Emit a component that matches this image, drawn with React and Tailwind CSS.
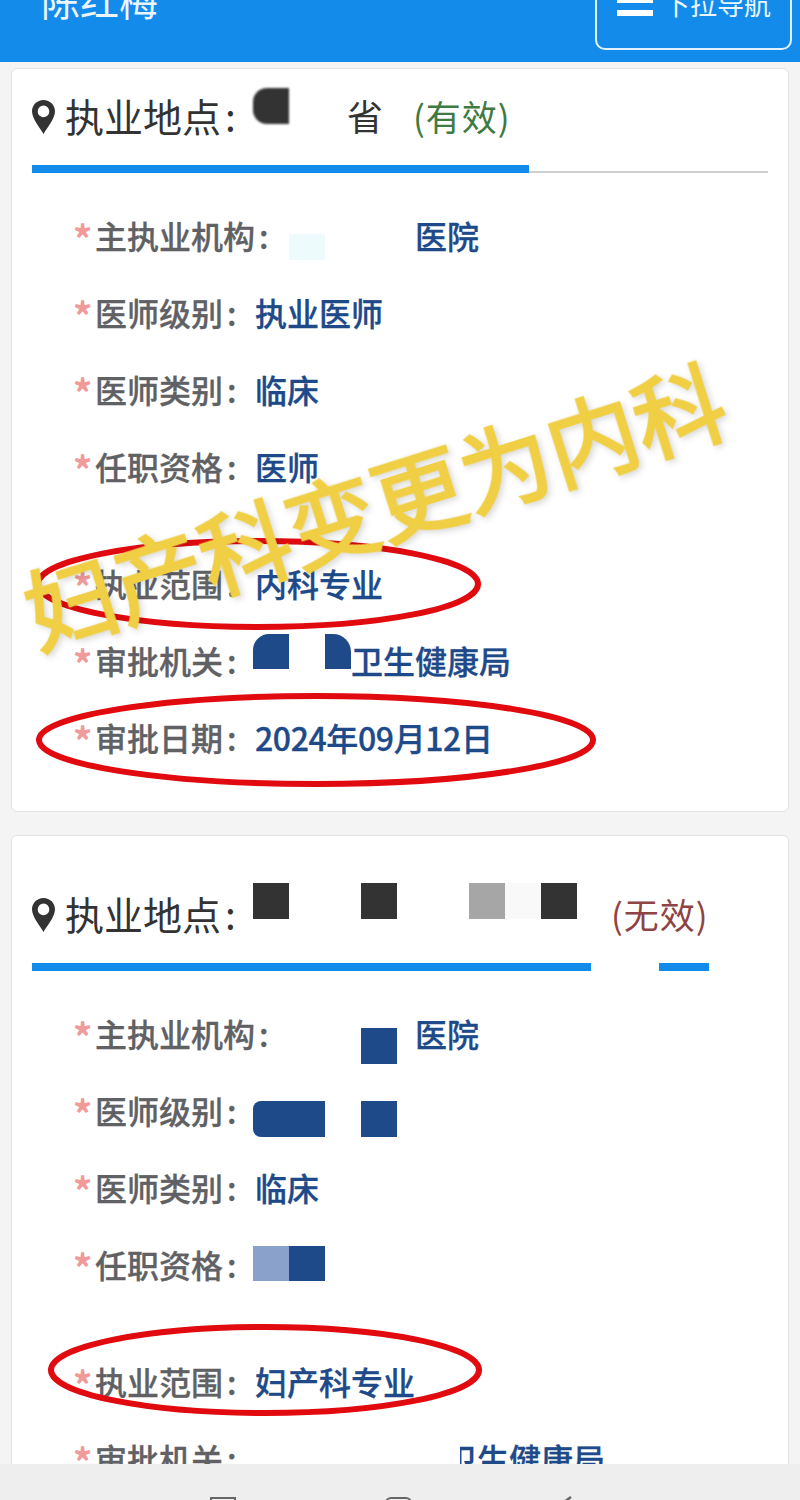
import React from "react";

const FONT = { fontFamily: '"Noto Sans CJK SC", "Noto Sans", sans-serif' };

function Pin() {
  return (
    <svg width="23" height="34" viewBox="0 0 23 34" className="shrink-0">
      <path
        fillRule="evenodd"
        fill="#333"
        d="M11.5 0C5.1 0 0 5 0 11.3 0 19 8.6 28.8 11.5 34 14.4 28.8 23 19 23 11.3 23 5 17.9 0 11.5 0ZM11.5 5.6a5.8 5.8 0 1 1 0 11.6 5.8 5.8 0 0 1 0-11.6Z"
      />
    </svg>
  );
}

function Colon() {
  return <span className="ml-[4px]">:</span>;
}

function Heading({ children }) {
  return (
    <div className="flex h-[96px] items-center pl-[20px]">
      <Pin />
      <span className="ml-[10px] w-[188px] shrink-0 -translate-y-[2px] whitespace-nowrap text-[39px] leading-none text-[#333]">
        执业地点<span className="ml-[4px]">:</span>
      </span>
      {children}
    </div>
  );
}

function Row({ label, children, className = "" }) {
  return (
    <div className={`flex h-[77px] items-center pb-[8px] pl-[61px] ${className}`}>
      <span className="w-[22px] shrink-0 translate-y-[3px] text-[38px] leading-none font-bold text-[#f09a9a]">*</span>
      <span className="w-[160px] shrink-0 whitespace-nowrap text-[32px] leading-none font-medium text-[#5f6165] [-webkit-text-stroke:0.3px_#5f6165]">
        {label}
        <Colon />
      </span>
      <div className="flex items-center whitespace-nowrap text-[32px] leading-none font-medium text-[#1e4a8a] [-webkit-text-stroke:0.3px_#1e4a8a]">
        {children}
      </div>
    </div>
  );
}

export default function App() {
  return (
    <div style={FONT} className="relative flex h-[1500px] w-[800px] flex-col overflow-hidden bg-[#f4f4f4]">
      <header className="flex h-[62px] shrink-0 items-start justify-between overflow-hidden bg-[#128bea] pl-[41px] pr-[8px]">
        <span className="-mt-[21px] text-[39px] leading-[40px] whitespace-nowrap text-[#eaf5fe]">陈红梅</span>
        <div className="-mt-[10px] flex h-[60px] w-[197px] items-start rounded-[10px] border-2 border-[#e3f1fd] pl-[20px]">
          <div className="mt-[6px] flex w-[36px] flex-col gap-[7px]">
            <span className="h-[5px] bg-white" />
            <span className="h-[6px] bg-white" />
          </div>
          <span className="-mt-[3px] ml-[10px] text-[27px] leading-[30px] whitespace-nowrap text-[#eaf5fe]">下拉导航</span>
        </div>
      </header>

      <main className="min-h-0 flex-1 overflow-hidden px-[11px] pt-[6px]">
        <section className="h-[744px] rounded-[6px] border border-[#e2e2e2] bg-white">
          <Heading>
            <span className="h-[36px] w-[36px] shrink-0 -translate-y-[11px] rounded-l-[14px] bg-[#333] blur-[1px]" />
            <span className="ml-[58px] -translate-y-[2px] text-[36px] leading-none text-[#333]">省</span>
            <span className="ml-[30px] -translate-y-[2px] text-[35px] leading-none tracking-[1px] whitespace-nowrap text-[#3f7a43]">(有效)</span>
          </Heading>
          <div className="mx-[20px] flex h-[8px] items-end">
            <div className="h-[8px] w-[497px] bg-[#128bea]" />
            <div className="h-[2px] flex-1 bg-[#cfcfcf]" />
          </div>
          <div className="mt-[27px]">
            <Row label="主执业机构">
              <span className="ml-[34px] h-[26px] w-[36px] translate-y-[12px] bg-[#eefbfd]" />
              <span className="ml-[90px]">医院</span>
            </Row>
            <Row label="医师级别">执业医师</Row>
            <Row label="医师类别">临床</Row>
            <Row label="任职资格">医师</Row>
            <Row label="执业范围" className="mt-[40px]">内科专业</Row>
            <Row label="审批机关">
              <span className="-ml-[2px] h-[35px] w-[36px] -translate-y-[8px] rounded-tl-[16px] bg-[#1e4a8a] blur-[0.5px]" />
              <span className="ml-[36px] h-[35px] w-[26px] -translate-y-[8px] rounded-tr-[18px] bg-[#1e4a8a] blur-[0.5px]" />
              <span>卫生健康局</span>
            </Row>
            <Row label="审批日期">
              <span className="tracking-[-0.4px]">2024年09月12日</span>
            </Row>
          </div>
        </section>

        <section className="mt-[23px] rounded-[6px] border border-[#e2e2e2] bg-white pt-[31px]">
          <Heading>
            <span className="h-[36px] w-[36px] shrink-0 -translate-y-[14px] bg-[#333]" />
            <span className="ml-[72px] h-[36px] w-[36px] shrink-0 -translate-y-[14px] bg-[#333]" />
            <span className="ml-[72px] h-[36px] w-[36px] shrink-0 -translate-y-[14px] bg-[#a6a6a6]" />
            <span className="h-[36px] w-[36px] shrink-0 -translate-y-[14px] bg-[#f9f9f9]" />
            <span className="h-[36px] w-[36px] shrink-0 -translate-y-[14px] bg-[#333]" />
            <span className="ml-[34px] -translate-y-[2px] text-[35px] leading-none tracking-[1px] whitespace-nowrap text-[#8f4444]">(无效)</span>
          </Heading>
          <div className="mx-[20px] flex h-[8px] items-end">
            <div className="h-[8px] w-[559px] bg-[#128bea]" />
            <div className="ml-[68px] h-[8px] w-[50px] bg-[#128bea] blur-[0.5px]" />
          </div>
          <div className="mt-[27px]">
            <Row label="主执业机构">
              <span className="ml-[106px] h-[36px] w-[36px] translate-y-[13px] bg-[#1e4a8a]" />
              <span className="ml-[18px]">医院</span>
            </Row>
            <Row label="医师级别">
              <span className="-ml-[2px] h-[36px] w-[72px] translate-y-[9px] rounded-l-[8px] bg-[#1e4a8a] blur-[0.5px]" />
              <span className="ml-[36px] h-[36px] w-[36px] translate-y-[9px] bg-[#1e4a8a]" />
            </Row>
            <Row label="医师类别">临床</Row>
            <Row label="任职资格">
              <span className="-ml-[2px] h-[35px] w-[36px] bg-[#8aa2cb]" />
              <span className="h-[35px] w-[36px] bg-[#1e4a8a]" />
            </Row>
            <Row label="执业范围" className="mt-[40px]">妇产科专业</Row>
            <Row label="审批机关">
              <span className="relative ml-[190px]">
                卫生健康局
                <span className="absolute top-0 -left-[1px] h-[34px] w-[16px] bg-white" />
              </span>
            </Row>
          </div>
        </section>
      </main>

      <footer className="relative z-10 flex h-[36px] shrink-0 items-start bg-[#eeeeee] pt-[33px] pl-[210px]">
        <span className="h-[8px] w-[26px] border-2 border-[#666]" />
        <span className="ml-[149px] h-[8px] w-[27px] rounded-t-[6px] border-2 border-[#666]" />
        <svg width="16" height="6" viewBox="0 0 16 6" className="ml-[146px] -mt-[1px]">
          <path d="M13 1 L6 6" stroke="#666" strokeWidth="2.5" fill="none" />
        </svg>
      </footer>

      <svg width="800" height="1500" viewBox="0 0 800 1500" className="pointer-events-none absolute top-0 left-0">
        <g fill="none" stroke="#e00a0f" strokeWidth="6">
          <ellipse cx="258" cy="584" rx="220" ry="43" />
          <ellipse cx="316" cy="740" rx="277" ry="44" />
          <ellipse cx="265" cy="1370" rx="214" ry="43" />
        </g>
      </svg>

      <div className="pointer-events-none absolute top-[452px] left-[1px] w-[745px] -rotate-[17.5deg] text-center text-[91px] leading-[100px] whitespace-nowrap text-[#f0cf45] drop-shadow-[2px_3px_3px_rgba(0,0,0,0.15)] [-webkit-text-stroke:2.5px_#f0cf45]">
        妇产科变更为内科
      </div>
    </div>
  );
}
